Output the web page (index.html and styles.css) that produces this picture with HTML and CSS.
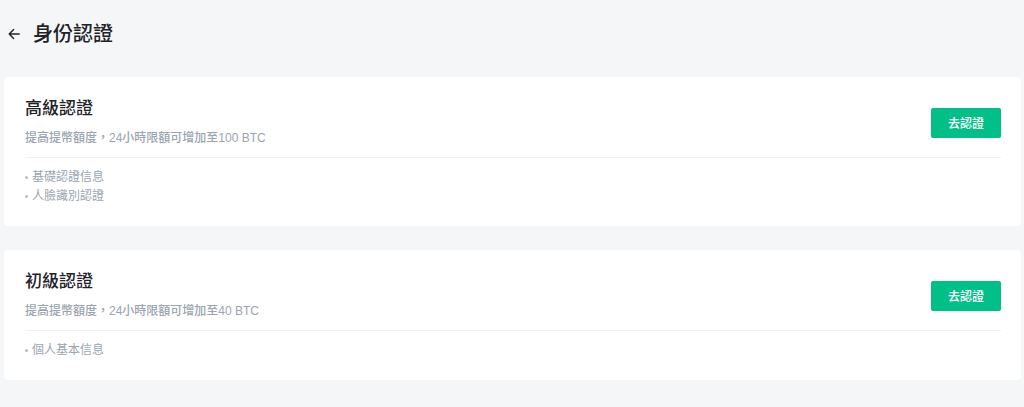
FILE: index.html
```html
<!DOCTYPE html>
<html lang="zh-Hant">
<head>
<meta charset="utf-8">
<link rel="stylesheet" href="styles.css">
</head>
<body>
<div class="page">
  <header class="header">
    <svg class="back" width="12" height="12" viewBox="0 0 12 12" fill="none" stroke="#1f2329" stroke-width="1.4" stroke-linecap="round" stroke-linejoin="round">
      <path d="M11.2 6H1.2M5.6 1.6L1.2 6l4.4 4.4"/>
    </svg>
    <h1 class="page-title">身份認證</h1>
  </header>

  <section class="card">
    <div class="card-head">
      <div class="card-info">
        <h2 class="card-title">高級認證</h2>
        <p class="card-desc">提高提幣額度，24小時限額可增加至100 BTC</p>
      </div>
      <button class="btn">去認證</button>
    </div>
    <ul class="req-list">
      <li>基礎認證信息</li>
      <li>人臉識別認證</li>
    </ul>
  </section>

  <section class="card">
    <div class="card-head">
      <div class="card-info">
        <h2 class="card-title">初級認證</h2>
        <p class="card-desc">提高提幣額度，24小時限額可增加至40 BTC</p>
      </div>
      <button class="btn">去認證</button>
    </div>
    <ul class="req-list">
      <li>個人基本信息</li>
    </ul>
  </section>
</div>
</body>
</html>
```

FILE: styles.css
```css
* { box-sizing: border-box; }

html, body {
  margin: 0;
  padding: 0;
  background: #f5f6f8;
  font-family: "Liberation Sans", "Noto Sans CJK TC", "Noto Sans CJK SC", sans-serif;
  color: #1f2329;
}

.page {
  padding: 0 3px 0 4px;
}

.header {
  display: flex;
  align-items: center;
  height: 68px;
  padding-left: 4px;
  margin-bottom: 9px;
}

.back {
  display: block;
  flex: none;
  margin-right: 13px;
}

.page-title {
  margin: 0;
  font-size: 20px;
  line-height: 28px;
  font-weight: 500;
  color: #1f2329;
}

.card {
  background: #fff;
  border-radius: 4px;
  padding: 20px 20px 20px 21px;
  margin-bottom: 24px;
}

.card-head {
  display: flex;
  align-items: center;
  justify-content: space-between;
  padding-bottom: 9px;
  border-bottom: 1px solid #eef0f3;
}

.card-title {
  margin: 0;
  font-size: 17px;
  line-height: 24px;
  font-weight: 500;
  color: #1f2329;
}

.card-desc {
  margin: 7px 0 0;
  font-size: 12px;
  line-height: 20px;
  font-weight: 500;
  color: #9ba4b0;
}

.btn {
  width: 70px;
  height: 30px;
  border: none;
  border-radius: 2px;
  background: #00c087;
  color: #fff;
  font-family: inherit;
  font-size: 12px;
  font-weight: 500;
  padding: 0;
  cursor: pointer;
}

.req-list {
  list-style: none;
  margin: 10px 0 0;
  padding: 0;
}

.req-list li {
  display: flex;
  align-items: center;
  font-size: 12px;
  line-height: 19px;
  color: #9ba4b0;
}

.req-list li::before {
  content: "";
  width: 3px;
  height: 3px;
  border-radius: 50%;
  background: #b8bec8;
  margin: 0 4px 0 0;
  flex: none;
}
```
